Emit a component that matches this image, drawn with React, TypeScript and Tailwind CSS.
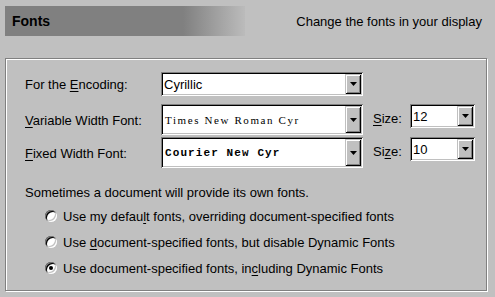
import type { ReactNode } from 'react'

const SUNKEN = 'shadow-[inset_1px_1px_0_#808080,inset_-1px_-1px_0_#ffffff,inset_2px_2px_0_#000000,inset_-2px_-2px_0_#c0c0c0]'
const RAISED = 'shadow-[inset_1px_1px_0_#c0c0c0,inset_-1px_-1px_0_#000000,inset_2px_2px_0_#ffffff,inset_-2px_-2px_0_#808080]'

function Arrow(){
  return (
    <svg width="7" height="4" viewBox="0 0 7 4" className="block">
      <path d="M0 0h7L3.5 4z" fill="#000" />
    </svg>
  )
}

function Select({ children, className, textClass }: { children: ReactNode, className: string, textClass?: string }){
  return (
    <div className={`flex bg-white p-[2px] ${SUNKEN} ${className}`}>
      <div className={`flex-1 flex items-center overflow-hidden whitespace-nowrap ${textClass ?? 'pl-[1px]'}`}><span>{children}</span></div>
      <div className={`w-[16px] bg-[#c0c0c0] flex items-center justify-center ${RAISED}`}>
        <Arrow />
      </div>
    </div>
  )
}

function Radio({ checked, children }: { checked?: boolean, children: ReactNode }){
  return (
    <div className="flex items-center h-[26px]">
      <div className={`w-[12px] h-[12px] rounded-full bg-white flex items-center justify-center ${SUNKEN}`}>
        {checked && <div className="w-[4px] h-[4px] rounded-full bg-black" />}
      </div>
      <span className="ml-[6px]">{children}</span>
    </div>
  )
}

const U = ({ children }: { children: ReactNode }) => <u className="underline underline-offset-[2px]">{children}</u>

export default function App(){
  return (
    <div className="w-[495px] h-[297px] bg-[#c0c0c0] text-black text-[13px] leading-[15px] font-['Liberation_Sans',Arial,sans-serif] overflow-hidden">
      <div className="flex items-center justify-between pt-[6px] pl-[5px] pr-[13px]">
        <div className="w-[240px] h-[30px] flex items-center pl-[7px] bg-[linear-gradient(to_right,#808080_0,#808080_178px,#c0c0c0_245px)]">
          <span className="font-bold text-[14px]">Fonts</span>
        </div>
        <span>Change the fonts in your display</span>
      </div>

      <div className="ml-[5px] mt-[22px] w-[482px] h-[233px] border border-[#808080] shadow-[inset_1px_1px_0_#ffffff,1px_1px_0_#ffffff]">
        <div className="pt-[13px] pl-[19px]">
          <div className="flex h-[24px]">
            <div className="w-[136px] flex items-center"><span>For the <U>E</U>ncoding:</span></div>
            <Select className="w-[202px] h-[24px]">Cyrillic</Select>
          </div>

          <div className="flex mt-[8px] h-[31px]">
            <div className="w-[136px] flex items-center pt-[1px]"><span><U>V</U>ariable Width Font:</span></div>
            <Select className="w-[202px] h-[31px]" textClass="pl-[2px] pt-[1px] font-['Liberation_Serif',serif] text-[11px] tracking-[1.6px]">Times New Roman Cyr</Select>
            <div className="w-[47px] pl-[10px] flex items-center h-[31px] pb-[3px]"><span><U>S</U>ize:</span></div>
            <Select className="w-[65px] h-[24px]">12</Select>
          </div>

          <div className="flex mt-[2px] h-[31px]">
            <div className="w-[136px] flex items-center pt-[2px]"><span><U>F</U>ixed Width Font:</span></div>
            <Select className="w-[202px] h-[31px]" textClass="pl-[2px] pt-[2px] font-['Liberation_Mono',monospace] font-bold text-[11px] tracking-[1.1px]">Courier New Cyr</Select>
            <div className="w-[47px] pl-[10px] flex items-center h-[31px] pb-[2px]"><span>Si<U>z</U>e:</span></div>
            <Select className="w-[65px] h-[24px]">10</Select>
          </div>

          <div className="mt-[17px]">Sometimes a document will provide its own fonts.</div>
        </div>

        <div className="pl-[39px] mt-[3px]">
          <Radio>Use my defau<U>l</U>t fonts, overriding document-specified fonts</Radio>
          <Radio>Use <U>d</U>ocument-specified fonts, but disable Dynamic Fonts</Radio>
          <Radio checked>Use document-specified fonts, in<U>c</U>luding Dynamic Fonts</Radio>
        </div>
      </div>
    </div>
  )
}
